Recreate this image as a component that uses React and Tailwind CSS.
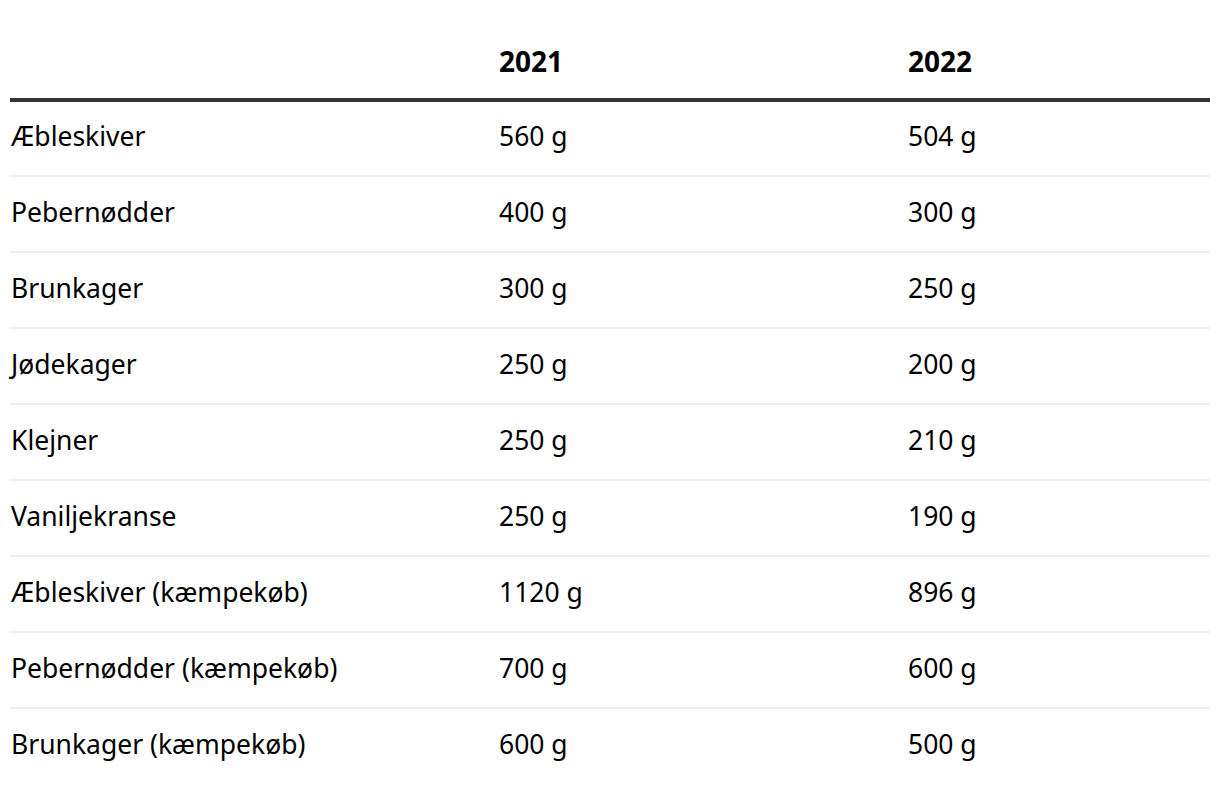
import React from "react";

const rows = [
  ["Æbleskiver", "560 g", "504 g"],
  ["Pebernødder", "400 g", "300 g"],
  ["Brunkager", "300 g", "250 g"],
  ["Jødekager", "250 g", "200 g"],
  ["Klejner", "250 g", "210 g"],
  ["Vaniljekranse", "250 g", "190 g"],
  ["Æbleskiver (kæmpekøb)", "1120 g", "896 g"],
  ["Pebernødder (kæmpekøb)", "700 g", "600 g"],
  ["Brunkager (kæmpekøb)", "600 g", "500 g"],
];

export default function App() {
  return (
    <div className="w-full min-h-screen bg-white px-[10px] pt-[24px] text-black" style={{ fontFamily: '"Noto Sans", sans-serif' }}>
      <table className="w-full border-collapse text-[26.5px]">
        <thead>
          <tr className="border-b-4 border-[#333]">
            <th className="w-[489px] h-[76px] text-left font-bold"></th>
            <th className="w-[409px] h-[76px] text-left font-bold text-[28px]">2021</th>
            <th className="h-[76px] text-left font-bold text-[28px]">2022</th>
          </tr>
        </thead>
        <tbody>
          {rows.map((r, i) => (
            <tr key={i} className={i < rows.length - 1 ? "border-b-2 border-[#eeeeee]" : ""}>
              <td className="h-[76px] pl-[1px] pb-[3px]">{r[0]}</td>
              <td className="h-[76px] pb-[3px]">{r[1]}</td>
              <td className="h-[76px] pb-[3px]">{r[2]}</td>
            </tr>
          ))}
        </tbody>
      </table>
    </div>
  );
}
